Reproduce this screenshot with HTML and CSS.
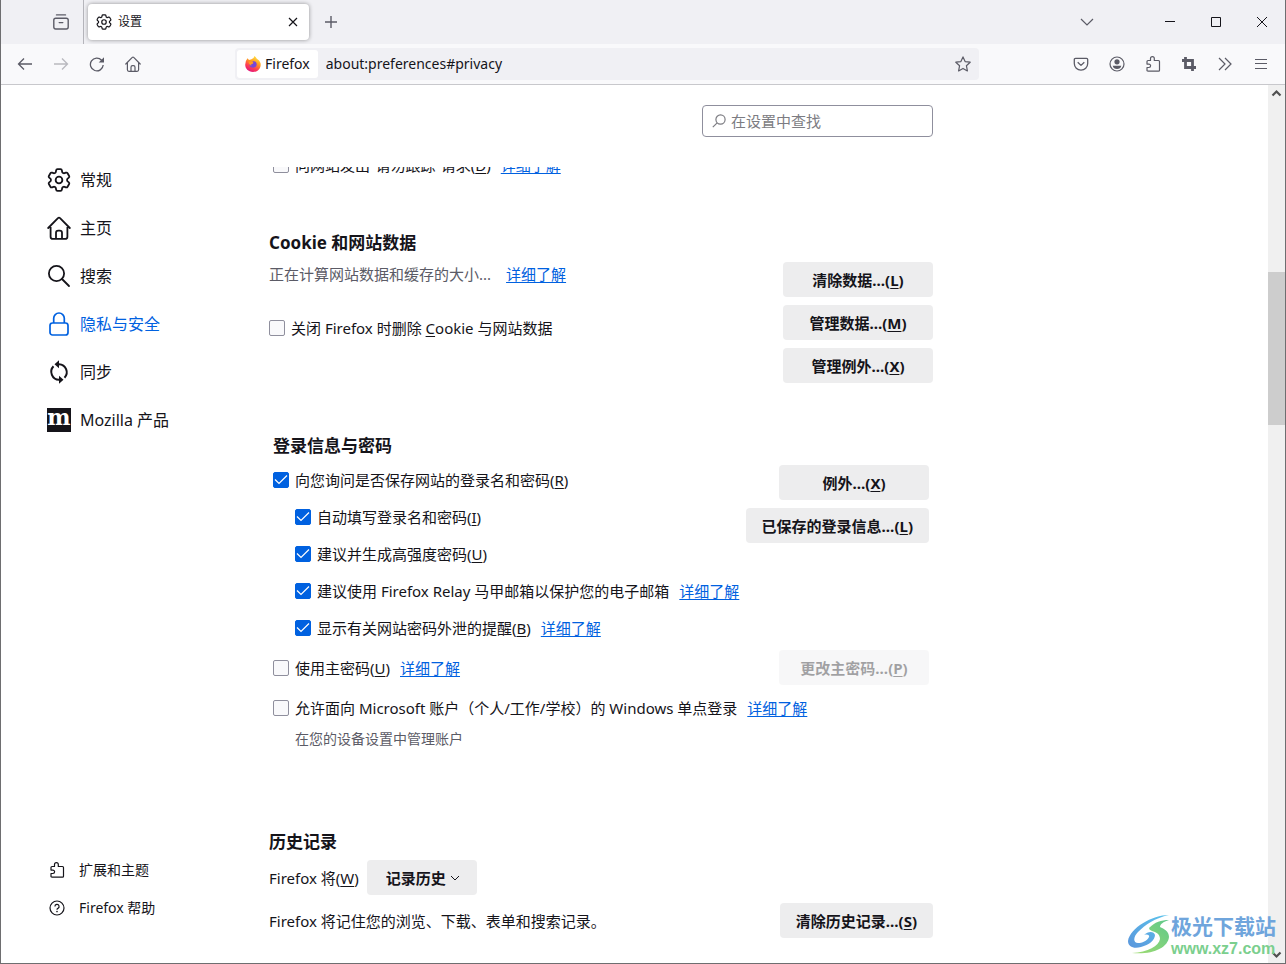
FILE: index.html
```html
<!DOCTYPE html>
<html lang="zh-CN">
<head>
<meta charset="utf-8">
<title>设置</title>
<link rel="stylesheet" href="styles.css">
</head>
<body>
<svg class="defs" aria-hidden="true">
  <symbol id="gear" viewBox="2 2 20 20"><path fill="none" stroke="currentColor" stroke-linejoin="round" d="M9.594 3.94c.09-.542.56-.94 1.11-.94h2.593c.55 0 1.02.398 1.11.94l.213 1.281c.063.374.313.686.645.87.074.04.147.083.22.127.325.196.72.257 1.075.124l1.217-.456a1.125 1.125 0 0 1 1.37.49l1.296 2.247a1.125 1.125 0 0 1-.26 1.431l-1.003.827c-.293.241-.438.613-.43.992a7.723 7.723 0 0 1 0 .255c-.008.378.137.75.43.991l1.004.827c.424.35.534.955.26 1.43l-1.298 2.247a1.125 1.125 0 0 1-1.369.491l-1.217-.456c-.355-.133-.75-.072-1.076.124a6.47 6.47 0 0 1-.22.128c-.331.183-.581.495-.644.869l-.213 1.281c-.09.543-.56.94-1.11.94h-2.594c-.55 0-1.019-.398-1.11-.94l-.213-1.281c-.062-.374-.312-.686-.644-.87a6.52 6.52 0 0 1-.22-.127c-.325-.196-.72-.257-1.076-.124l-1.217.456a1.125 1.125 0 0 1-1.369-.49l-1.297-2.247a1.125 1.125 0 0 1 .26-1.431l1.004-.827c.292-.24.437-.613.43-.991a6.932 6.932 0 0 1 0-.255c.007-.38-.138-.751-.43-.992l-1.004-.827a1.125 1.125 0 0 1-.26-1.43l1.297-2.247a1.125 1.125 0 0 1 1.37-.491l1.216.456c.356.133.751.072 1.076-.124.072-.044.146-.086.22-.128.332-.183.582-.495.644-.869l.214-1.28Z"/><circle cx="12" cy="12" r="2.8" fill="none" stroke="currentColor"/></symbol>
  <symbol id="home" viewBox="0 0 16 16"><path fill="none" stroke="currentColor" stroke-linejoin="round" stroke-linecap="round" d="M.8 8 7.3 1.400Q8 .8 8.700 1.400L15.200 8M2.400 6.500v7.300q0 1.500 1.500 1.500h8.200q1.500 0 1.500-1.500V6.500M6 15.200v-4q0-1.500 1.500-1.500h1q1.500 0 1.500 1.500v4"/></symbol>
  <symbol id="puzzle" viewBox="0 0 16 16"><path fill="none" stroke="currentColor" stroke-linejoin="round" d="M5.500 4.500V2.500a1.900 1.900 0 0 1 3.800 0v2h4.200q1 0 1 1v8.700q0 1-1 1H3q-1 0-1-1v-2.700h1.900a1.700 1.700 0 0 0 0-3.400H2V5.500q0-1 1-1z"/></symbol>
</svg>

<div class="window">
  <header class="tabs">
    <button class="tool view" aria-label="Firefox View"><svg class="i16" viewBox="0 0 16 16"><path fill="none" stroke="currentColor" stroke-width="1.400" stroke-linecap="round" d="M3.500.900h9M2.700 4.200h10.600q1.900 0 1.900 1.900v7q0 1.900-1.900 1.900H2.700Q.8 15 .8 13.100v-7q0-1.900 1.900-1.900zM6.200 8.600h3.600"/></svg></button>
    <div class="tab"><svg class="i16 g"><use href="#gear"/></svg><span class="tab-title">设置</span>
      <button class="tab-close" aria-label="关闭标签页"><svg class="i16" viewBox="0 0 16 16"><path stroke="currentColor" stroke-width="1.200" d="m4 4 8 8m0-8-8 8"/></svg></button></div>
    <button class="tool" aria-label="新建标签页"><svg class="i16" viewBox="0 0 16 16"><path stroke="currentColor" stroke-width="1.400" d="M8 2v12M2 8h12"/></svg></button>
    <span class="grow"></span>
    <button class="tool list-tabs" aria-label="列出标签页"><svg class="i16" viewBox="0 0 16 16"><path fill="none" stroke="currentColor" stroke-width="1.200" d="m2 5 6 6 6-6"/></svg></button>
    <button class="win" aria-label="最小化"><svg class="i16" viewBox="0 0 16 16"><path stroke="currentColor" d="M3 7.500h10"/></svg></button>
    <button class="win" aria-label="最大化"><svg class="i16" viewBox="0 0 16 16"><path fill="none" stroke="currentColor" d="M3.500 3.500h9v9h-9z"/></svg></button>
    <button class="win" aria-label="关闭"><svg class="i16" viewBox="0 0 16 16"><path stroke="currentColor" d="m3 3 10 10m0-10L3 13"/></svg></button>
  </header>

  <div class="toolbar">
    <button class="tool" aria-label="后退"><svg class="i16" viewBox="0 0 16 16"><path fill="none" stroke="currentColor" stroke-width="1.300" d="M15 8H1.500M7 2.500 1.500 8 7 13.500"/></svg></button>
    <button class="tool" aria-label="前进" disabled><svg class="i16" viewBox="0 0 16 16"><path fill="none" stroke="currentColor" stroke-width="1.300" d="M1 8h13.500M9 2.500 14.500 8 9 13.500"/></svg></button>
    <button class="tool" aria-label="重新加载"><svg class="i16" viewBox="0 0 16 16"><path fill="none" stroke="currentColor" stroke-width="1.300" d="M14.200 9A6.400 6.400 0 1 1 12.600 4.200"/><path fill="currentColor" d="M15 1.200v5.300H9.700z"/></svg></button>
    <button class="tool" aria-label="主页"><svg class="i16 h"><use href="#home"/></svg></button>
    <div class="url">
      <span class="identity"><svg class="i16" viewBox="0 0 16 16"><defs><linearGradient id="fx" x1=".8" y1="0" x2=".3" y2="1"><stop offset="0" stop-color="#fff04a"/><stop offset=".4" stop-color="#ff9a1f"/><stop offset=".7" stop-color="#ff4050"/><stop offset="1" stop-color="#e01580"/></linearGradient></defs><path fill="url(#fx)" d="M2.500 2.300 4 4.100q1-.6 2-.5L8.500 2l1-1.900Q11 1 11.800 2.800 14.600 4 15.500 7c1 4.500-2.200 8.900-7.500 8.900C3 15.900.2 12.500.2 8.800Q.2 5 2.500 2.300z"/><path fill="#7646d8" d="M7.500 5.300c3.200-.5 4.600 1.600 4.100 3.800-.5 2-2.600 3-4.500 2.500-2-.5-3-2-2.500-3.900l2.300.4 1.200-1z"/><path fill="#ff9b22" d="M3.500 5.600 6 5.500l2.600 1.300-1.400 1.300-1.300.3.700 1.400Q4 9.500 3.500 5.600z"/></svg>Firefox</span>
      <input class="address" type="text" aria-label="地址栏" value="about:preferences#privacy">
      <button class="star" aria-label="添加书签"><svg class="i16" viewBox="0 0 16 16"><path fill="none" stroke="currentColor" stroke-width="1.200" stroke-linejoin="round" d="m8 .9 2.100 4.700 5.100.6-3.800 3.500 1 5.200L8 12.400l-4.400 2.500 1-5.200L.8 6.200l5.100-.6z"/></svg></button>
    </div>
    <button class="tool" aria-label="Pocket"><svg class="i16" viewBox="0 0 16 16"><path fill="none" stroke="currentColor" stroke-width="1.300" stroke-linejoin="round" d="M2.500 2.300h11q1.200 0 1.200 1.200v4a6.700 6.700 0 0 1-13.400 0v-4q0-1.200 1.200-1.200zM4.700 6.200 8 9.400l3.300-3.200"/></svg></button>
    <button class="tool" aria-label="账户"><svg class="i16" viewBox="0 0 16 16"><circle cx="8" cy="8" r="7" fill="none" stroke="currentColor" stroke-width="1.200"/><circle cx="8" cy="5.800" r="2.600" fill="currentColor"/><path fill="currentColor" d="M3.700 9.800h8.600q-.8 3.200-4.300 3.200T3.700 9.800z"/></svg></button>
    <button class="tool" aria-label="扩展"><svg class="i16 p"><use href="#puzzle"/></svg></button>
    <button class="tool" aria-label="截图"><svg class="i16" viewBox="0 0 16 16"><path fill="none" stroke="currentColor" stroke-width="2.800" d="M4.500 1v10.500H15M1 4.500h10.500V15"/></svg></button>
    <button class="tool" aria-label="更多工具"><svg class="i16" viewBox="0 0 16 16"><path fill="none" stroke="currentColor" stroke-width="1.200" d="m2 2 6 6-6 6M8 2l6 6-6 6"/></svg></button>
    <button class="tool" aria-label="菜单"><svg class="i16" viewBox="0 0 16 16"><path stroke="currentColor" stroke-width="1.200" d="M2 3.500h12M2 7.500h12M2 12.500h12"/></svg></button>
  </div>

  <div class="page">
    <nav class="side">
      <a class="cat" href="#general"><svg class="i24 g"><use href="#gear"/></svg>常规</a>
      <a class="cat" href="#home-page"><svg class="i24 h"><use href="#home"/></svg>主页</a>
      <a class="cat" href="#search"><svg class="i24" viewBox="0 0 24 24"><g fill="none" stroke="currentColor" stroke-width="1.800" stroke-linecap="round"><circle cx="9.500" cy="9.500" r="7.600"/><path d="m15 15 7 7"/></g></svg>搜索</a>
      <a class="cat on" href="#privacy"><svg class="i24" viewBox="0 0 24 24"><g fill="none" stroke="currentColor" stroke-width="1.700"><rect x="3" y="11" width="18" height="12" rx="2.500"/><path d="M6.700 11V6.300a5.300 5.300 0 0 1 10.600 0V11"/></g></svg>隐私与安全</a>
      <a class="cat" href="#sync"><svg class="i24" viewBox="0 0 24 24"><g fill="none" stroke="currentColor" stroke-width="2"><path d="M10 4.200h2a8 8 0 0 1 5.500 13.500M14 19.800h-2A8 8 0 0 1 6.500 6.300"/></g><path fill="currentColor" d="M12 .2v8L7.500 4.200zM12 15.800v8l4.500-4z"/></svg>同步</a>
      <a class="cat" href="#more"><span class="moz" aria-hidden="true">m</span>Mozilla 产品</a>
      <span class="grow"></span>
      <a class="foot" href="#addons"><svg class="i16 p"><use href="#puzzle"/></svg>扩展和主题</a>
      <a class="foot" href="#help"><svg class="i16" viewBox="0 0 16 16"><g fill="none" stroke="currentColor" stroke-width="1.200"><circle cx="8" cy="8" r="7"/><path d="M5.900 6.500a2.100 2.100 0 1 1 3 1.900Q8 8.800 8 9.800"/></g><circle cx="8" cy="11.600" r=".8" fill="currentColor"/></svg>Firefox 帮助</a>
    </nav>

    <main class="main">
      <div class="search-row">
        <label class="search"><svg class="i14" viewBox="0 0 14 14"><g fill="none" stroke="currentColor" stroke-width="1.200"><circle cx="8.500" cy="5.500" r="4.600"/><path d="m5.200 8.800-4.400 4.400"/></g></svg><input type="text" placeholder="在设置中查找" aria-label="在设置中查找"></label>
      </div>
      <div class="scroll">
        <div class="row dnt"><input type="checkbox" id="dnt"><label for="dnt">向网站发出“请勿跟踪”请求(<u>D</u>)</label><a href="#dnt">详细了解</a></div>

        <section class="cookies">
          <h2>Cookie 和网站数据</h2>
          <div class="split">
            <div>
              <div class="row"><span class="muted">正在计算网站数据和缓存的大小...</span><a class="wide" href="#data">详细了解</a></div>
              <div class="row delete"><input type="checkbox" id="del"><label for="del">关闭 Firefox 时删除 <u>C</u>ookie 与网站数据</label></div>
            </div>
            <div class="buttons">
              <button class="btn">清除数据…(<u>L</u>)</button>
              <button class="btn">管理数据…(<u>M</u>)</button>
              <button class="btn">管理例外…(<u>X</u>)</button>
            </div>
          </div>
        </section>

        <section class="logins">
          <h2>登录信息与密码</h2>
          <div class="split">
            <div class="options">
              <div class="row"><input type="checkbox" id="ask" checked><label for="ask">向您询问是否保存网站的登录名和密码(<u>R</u>)</label></div>
              <div class="row sub"><input type="checkbox" id="fill" checked><label for="fill">自动填写登录名和密码(<u>I</u>)</label></div>
              <div class="row sub"><input type="checkbox" id="strong" checked><label for="strong">建议并生成高强度密码(<u>U</u>)</label></div>
              <div class="row sub"><input type="checkbox" id="relay" checked><label for="relay">建议使用 Firefox Relay 马甲邮箱以保护您的电子邮箱</label><a href="#relay">详细了解</a></div>
              <div class="row sub"><input type="checkbox" id="breach" checked><label for="breach">显示有关网站密码外泄的提醒(<u>B</u>)</label><a href="#breach">详细了解</a></div>
            </div>
            <div class="buttons">
              <button class="btn">例外…(<u>X</u>)</button>
              <button class="btn">已保存的登录信息…(<u>L</u>)</button>
            </div>
          </div>
          <div class="row master"><input type="checkbox" id="master"><label for="master">使用主密码(<u>U</u>)</label><a href="#master">详细了解</a><span class="grow"></span><button class="btn" disabled>更改主密码…(<u>P</u>)</button></div>
          <div class="row sso"><input type="checkbox" id="sso"><label for="sso">允许面向 Microsoft 账户（个人/工作/学校）的 Windows 单点登录</label><a href="#sso">详细了解</a></div>
          <p class="note">在您的设备设置中管理账户</p>
        </section>

        <section class="history">
          <h2>历史记录</h2>
          <div class="row mode"><label for="mode">Firefox 将(<u>W</u>)</label><select id="mode"><option>记录历史</option></select></div>
          <div class="row remember"><span>Firefox 将记住您的浏览、下载、表单和搜索记录。</span><button class="btn">清除历史记录…(<u>S</u>)</button></div>
        </section>
      </div>
    </main>

    <div class="bar" aria-hidden="true">
      <svg class="arrow" viewBox="0 0 17 17"><path fill="none" stroke="#505050" stroke-width="2.200" d="m4.500 10.500 4-4 4 4"/></svg>
      <span class="before"></span><span class="thumb"></span><span class="after"></span>
      <svg class="arrow" viewBox="0 0 17 17"><path fill="none" stroke="#505050" stroke-width="2.200" d="m4.500 6.500 4 4 4-4"/></svg>
    </div>
  </div>

  <div class="mark">
    <svg class="swirl" viewBox="0 0 42 42"><defs><linearGradient id="bl" x1="1" y1="0" x2="0" y2="1"><stop offset="0" stop-color="#5bc4ec"/><stop offset="1" stop-color="#5b96dc"/></linearGradient><linearGradient id="gr" x1="1" y1="0" x2="0" y2="1"><stop offset="0" stop-color="#5fc88a"/><stop offset="1" stop-color="#a0dc70"/></linearGradient></defs>
      <path fill="url(#bl)" d="M41 1C24 1 2 14 0 27c0 6 6 8 13 6 8-2 14-7 14-12-1-4-7-4-11 0 3-1 6 0 5 2-2 4-7 6-11 6-5 0-5-6 0-11C17 11 27 4 41 1z"/>
      <path fill="url(#gr)" d="M21 14c6-6 12-8 20-8-6 2-9 4-9 7 4 2 9 4 9 10-1 11-17 18-37 16 16-1 27-7 28-14 0-5-4-7-8-8q-3-1-3-3z"/></svg>
    <div class="mark-text"><div class="mark-name">极光下载站</div><div class="mark-site">www.xz7.com</div></div>
  </div>
</div>
</body>
</html>
```
FILE: styles.css
```css
* { box-sizing: border-box; }
body {
  margin: 0;
  font: 15px/24px "Noto Sans", "Noto Sans CJK SC", sans-serif;
  color: #15141a;
}
button, input, select { font: inherit; color: inherit; border: 0; margin: 0; padding: 0; background: none; }
.defs { position: absolute; width: 0; height: 0; }
svg { display: block; flex: none; }
a { color: #0061e0; text-underline-offset: 2px; text-decoration-thickness: 1px; }
u { text-underline-offset: 2px; text-decoration-thickness: 1px; }
.grow { flex: 1; }
.i14 { width: 14px; height: 14px; }
.i16 { width: 16px; height: 16px; }
.i24 { width: 24px; height: 24px; }
.g { stroke-width: 1.5; }
.h, .p { stroke-width: 1.2; }

.window {
  position: relative;
  display: flex;
  flex-direction: column;
  height: 100vh;
  overflow: hidden;
  border: 1px solid #6e6e70;
  border-top: 0;
  background: #fff;
}

/* Tab strip */
.tabs { display: flex; align-items: center; height: 44px; background: #f0f0f4; color: #15141a; flex: none; }
.tool { width: 36px; height: 32px; display: grid; place-items: center; color: #5b5b66; flex: none; }
.tool:disabled { opacity: .4; }
.view { width: 83px; height: 44px; padding-left: 37px; border-right: 1px solid #b5b5bb; }
.tab {
  display: flex; align-items: center; gap: 6px;
  width: 221px; height: 36px; margin: 0 4px; padding: 0 8px;
  border-radius: 4px; background: #fff; box-shadow: 0 0 4px rgba(0, 0, 0, .4);
  font-size: 12px;
}
.tab-title { flex: 1; }
.list-tabs { margin-right: 42px; }
.win { width: 46px; height: 44px; display: grid; place-items: center; }

/* Navigation bar */
.toolbar {
  display: flex; align-items: center; flex: none;
  height: 41px; padding: 0 6px;
  background: #f9f9fb; border-bottom: 1px solid #c8c8cc;
}
.url {
  display: flex; align-items: center; flex: 1; min-width: 0;
  height: 32px; margin: 0 84px; padding-left: 2px;
  border-radius: 4px; background: #f0f0f4; font-size: 14px;
}
.identity { display: flex; align-items: center; gap: 4px; height: 28px; padding: 0 8px; border-radius: 3px; background: #fff; }
.address { flex: 1; min-width: 0; padding-left: 8px; height: 28px; line-height: 28px; }
.star { width: 32px; height: 32px; display: grid; place-items: center; color: #5b5b66; }

/* Page */
.page { display: flex; flex: 1; min-height: 0; }
.side { display: flex; flex-direction: column; width: 268px; flex: none; padding: 71px 0 36px 46px; }
.side a { color: inherit; text-decoration: none; }
.cat { display: flex; align-items: center; gap: 9px; height: 48px; font-size: 16px; }
.side .on { color: #0061e0; }
.moz {
  width: 24px; height: 24px; background: #15141a; color: #fff;
  font: bold 22px/18px "DejaVu Serif", serif;
  display: flex; justify-content: center;
}
.foot { display: flex; align-items: center; gap: 14px; height: 38px; padding-left: 2px; font-size: 14px; }

.main { display: flex; flex-direction: column; flex: 1; min-width: 0; }
.search-row { display: flex; justify-content: flex-end; max-width: 664px; height: 82px; padding-top: 20px; flex: none; }
.search {
  display: flex; align-items: center; gap: 5px; width: 231px; height: 32px; padding: 0 9px;
  border: 1px solid #8f8f9d; border-radius: 4px; color: #7c7c82;
}
.search input { flex: 1; min-width: 0; }
.search input::placeholder { color: #7c7c82; }
.scroll { flex: 1; min-height: 0; overflow: hidden; }
.scroll > * { max-width: 664px; }

h2 { margin: 0; font-size: 17px; line-height: 24px; font-weight: 700; }
.row { display: flex; align-items: center; min-height: 24px; white-space: nowrap; }
.row a { margin-left: 10px; }
.row a.wide { margin-left: 15px; }
.muted { color: #5b5b66; }
input[type="checkbox"] {
  appearance: none; width: 16px; height: 16px; margin-right: 6px; flex: none;
  border: 1px solid #8f8f9d; border-radius: 2px; background: #f9f9fb;
}
input[type="checkbox"]:checked {
  border-color: #0061e0;
  background: #0061e0 url("data:image/svg+xml,%3Csvg xmlns='http://www.w3.org/2000/svg' viewBox='0 0 14 14'%3E%3Cpath d='m1 6.500 4 4 8-8' fill='none' stroke='white' stroke-width='1.200'/%3E%3C/svg%3E") center / 14px 14px;
}
.btn {
  min-width: 150px; height: 35px; padding: 0 16px; border-radius: 4px;
  background: #ededee; font-weight: 700; white-space: nowrap;
}
.btn:disabled { opacity: .4; }
.split { display: flex; justify-content: space-between; align-items: flex-start; padding-top: 7px; }
.buttons { display: flex; flex-direction: column; align-items: flex-end; gap: 8px; }

.dnt { margin-top: -14px; padding-left: 4px; }
.cookies { margin-top: 54px; }
.delete { margin-top: 30px; }
.logins { margin-top: 51px; padding: 0 4px; }
.options { display: grid; gap: 13px; padding-top: 3px; }
.sub { padding-left: 22px; }
.master { margin-top: 10px; }
.sso { margin-top: 11px; }
.note { margin: 7px 0 0 22px; font-size: 14px; color: #5b5b66; }
.history { margin-top: 79px; }
.mode { margin-top: 6px; gap: 8px; }
.remember { margin-top: 8px; justify-content: space-between; }
select {
  appearance: none; width: 110px; height: 35px; padding-left: 19px; border-radius: 4px; font-weight: 700;
  background: #ededee url("data:image/svg+xml,%3Csvg xmlns='http://www.w3.org/2000/svg' viewBox='0 0 10 10'%3E%3Cpath d='m1 3 4 4 4-4' fill='none' stroke='%2315141a'/%3E%3C/svg%3E") right 17px center / 10px 10px no-repeat;
}

/* Scrollbar */
.bar { display: flex; flex-direction: column; width: 17px; background: #f0f0f0; flex: none; }
.arrow { width: 17px; height: 17px; }
.before { flex: 170; }
.thumb { flex: 153; background: #cdcdcd; }
.after { flex: 521; }

/* Site mark laid over the lower right corner */
.mark { position: absolute; right: 9px; bottom: 6px; display: flex; align-items: center; gap: 1px; }
.mark-text { display: grid; gap: 4px; }
.swirl { width: 42px; height: 42px; }
.mark-name { font: 700 21px/24px "Noto Sans CJK SC", sans-serif; color: #6fa5dc; }
.mark-site { font: 700 16px/16px "Liberation Sans", sans-serif; color: #7bcf8e; }
```
